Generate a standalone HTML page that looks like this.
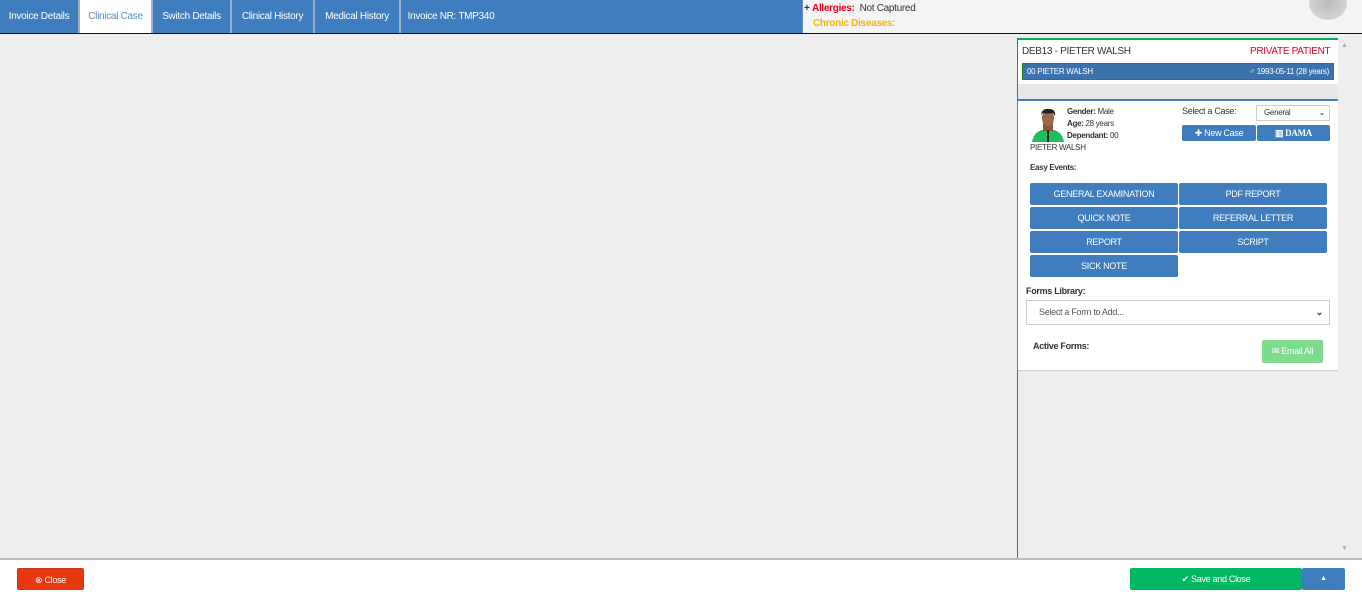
<!DOCTYPE html>
<html><head><style>
*{box-sizing:border-box;margin:0;padding:0}
body{width:1362px;height:596px;background:#eee;font-family:"Liberation Sans",sans-serif;font-size:10px;position:relative;overflow:hidden;color:#333;letter-spacing:-0.3px}
.abs{position:absolute}
.top{left:0;top:0;width:802px;height:33px;background:#3f7dbf}
.tab{position:absolute;top:0;height:33px;line-height:33px;color:#fff;font-size:10px;text-align:center;border-right:2px solid #9aaec4}
.line{left:0;top:33px;width:1362px;height:1px;background:#111}
.btn{position:absolute;background:#3f7dbf;color:#fff;border-radius:2px;text-align:center;font-size:9px}
</style></head><body>
<div class="abs top"></div>
<div class="tab" style="left:0;width:80px">Invoice Details</div>
<div class="tab" style="left:80px;width:73px;background:#fff;color:#5b8cc4">Clinical Case</div>
<div class="tab" style="left:153px;width:79px">Switch Details</div>
<div class="tab" style="left:232px;width:83px">Clinical History</div>
<div class="tab" style="left:315px;width:86px">Medical History</div>
<div class="tab" style="left:401px;width:100px;border:none">Invoice NR: TMP340</div>
<div class="abs" style="left:802px;top:0;width:560px;height:33px;background:#f4f4f4;border-left:1px solid #5b8cc4"></div>
<div class="abs" style="left:804px;top:3px;font-size:10px"><b>+</b> <b style="color:#e8001c">Allergies:</b>&nbsp; <span style="color:#333">Not Captured</span></div>
<div class="abs" style="left:813px;top:18px;font-size:10px;color:#f5b800;font-weight:bold">Chronic Diseases:</div>
<div class="abs" style="left:1309px;top:-14px;width:38px;height:34px;border-radius:50%;background:radial-gradient(#bbb,#ddd)"></div>
<div class="abs line"></div>

<div class="abs" style="left:1017px;top:38px;width:1px;height:520px;background:#666"></div>
<div class="abs" style="left:1341px;top:42px;font-size:7px;color:#aaa">▲</div>
<div class="abs" style="left:1341px;top:545px;font-size:7px;color:#aaa">▼</div>

<div class="abs" style="left:1018px;top:84px;width:320px;height:15px;background:#e8e8e8"></div>
<div class="abs" style="left:1018px;top:38px;width:320px;height:46px;background:#fff;border-top:2px solid #00b35a"></div>
<div class="abs" style="left:1022px;top:46px;font-size:10px;color:#333">DEB13 - PIETER WALSH</div>
<div class="abs" style="left:1250px;top:46px;font-size:10px;color:#e8001c">PRIVATE PATIENT</div>
<div class="abs" style="left:1022px;top:63px;width:312px;height:17px;background:#3a72ad;border:1px solid #1a8a2a;color:#fff;font-size:8px;line-height:15px;padding:0 4px">00 PIETER WALSH<span style="float:right">♂ 1993-05-11 (28 years)</span></div>

<div class="abs" style="left:1018px;top:99px;width:320px;height:271px;background:#fff;border-top:2px solid #3f7dbf;box-shadow:0 1px 1px #ccc"></div>
<svg class="abs" style="left:1030px;top:108px" width="36" height="34" viewBox="0 0 36 34"><path d="M2 34 Q4 24 12 22 L24 22 Q32 24 34 34Z" fill="#1fbf5a"/><rect x="13" y="14" width="10" height="9" fill="#8a5a3c"/><ellipse cx="18" cy="10" rx="6" ry="8" fill="#9a6a48"/><path d="M11 7 Q12 0 19 1 Q26 1 25 8 L23 5 Q17 6 13 5Z" fill="#222"/><path d="M17 22 L19 22 L19 34 L17 34Z" fill="#222"/></svg>
<div class="abs" style="left:1067px;top:106px;font-size:8px;line-height:12px"><b>Gender:</b> Male<br><b>Age:</b> 28 years<br><b>Dependant:</b> 00</div>
<div class="abs" style="left:1030px;top:143px;font-size:8px">PIETER WALSH</div>
<div class="abs" style="left:1182px;top:106px;font-size:9px">Select a Case:</div>
<div class="abs" style="left:1256px;top:105px;width:74px;height:16px;border:1px solid #ccc;font-size:8px;line-height:14px;padding-left:7px">General<span style="float:right;margin-right:4px">⌄</span></div>
<div class="btn" style="left:1182px;top:125px;width:74px;height:16px;line-height:16px">✚ New Case</div>
<div class="btn" style="left:1257px;top:125px;width:73px;height:16px;line-height:16px;font-weight:bold;font-family:'Liberation Serif',serif">▥ DAMA</div>

<div class="abs" style="left:1030px;top:163px;font-size:8px;font-weight:bold">Easy Events:</div>
<div class="btn" style="left:1030px;top:183px;width:148px;height:22px;line-height:22px">GENERAL EXAMINATION</div>
<div class="btn" style="left:1179px;top:183px;width:148px;height:22px;line-height:22px">PDF REPORT</div>
<div class="btn" style="left:1030px;top:207px;width:148px;height:22px;line-height:22px">QUICK NOTE</div>
<div class="btn" style="left:1179px;top:207px;width:148px;height:22px;line-height:22px">REFERRAL LETTER</div>
<div class="btn" style="left:1030px;top:231px;width:148px;height:22px;line-height:22px">REPORT</div>
<div class="btn" style="left:1179px;top:231px;width:148px;height:22px;line-height:22px">SCRIPT</div>
<div class="btn" style="left:1030px;top:255px;width:148px;height:22px;line-height:22px">SICK NOTE</div>
<div class="abs" style="left:1026px;top:286px;font-size:9px;font-weight:bold">Forms Library:</div>
<div class="abs" style="left:1026px;top:300px;width:304px;height:25px;border:1px solid #ccc;font-size:9px;line-height:23px;padding-left:12px;color:#555">Select a Form to Add...<span style="float:right;margin-right:6px;color:#333;font-weight:bold">⌄</span></div>
<div class="abs" style="left:1033px;top:341px;font-size:9px;font-weight:bold">Active Forms:</div>
<div class="btn" style="left:1262px;top:340px;width:61px;height:23px;line-height:23px;background:#7fdc8f">✉ Email All</div>

<div class="abs" style="left:0;top:558px;width:1362px;height:2px;background:#bbb"></div>
<div class="abs" style="left:0;top:560px;width:1362px;height:36px;background:#fff"></div>
<div class="btn" style="left:17px;top:568px;width:67px;height:22px;line-height:22px;background:#e8380d;border:1px solid #c32">⊗ Close</div>
<div class="btn" style="left:1130px;top:568px;width:172px;height:22px;line-height:22px;background:#00b862">✔ Save and Close</div>
<div class="btn" style="left:1302px;top:568px;width:43px;height:22px;line-height:22px;font-size:7px">▲</div>
</body></html>
